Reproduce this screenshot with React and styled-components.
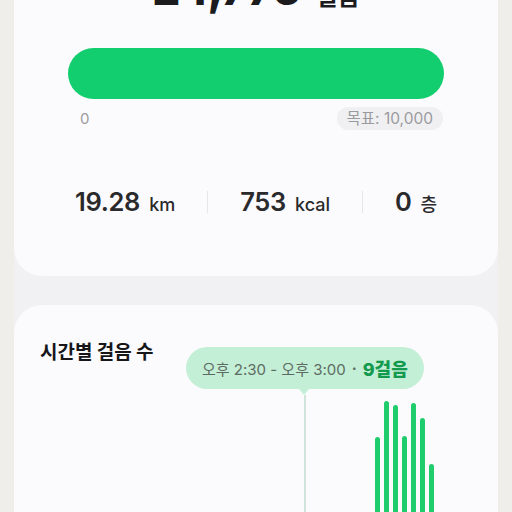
import React from "react";
import styled, { createGlobalStyle } from "styled-components";

const Global = createGlobalStyle`
  html, body { margin: 0; padding: 0; background: #efeeea; overflow: hidden; }
  body { font-family: Inter, "Noto Sans CJK KR", sans-serif; }
`;

const Column = styled.div`
  margin: -62px 14px 0;
  background: #f1f1f3;
  display: flex;
  flex-direction: column;
  gap: 29px;
  min-height: 600px;
`;

const Card = styled.section`
  background: #fbfbfd;
  border-radius: 28px;
  padding: ${(p) => p.$pad};
  display: flex;
  flex-direction: column;
`;

const FirstCard = styled(Card)`
  height: 338px;
  box-sizing: border-box;
`;

const Headline = styled.div`
  display: flex;
  justify-content: center;
  align-items: baseline;
  gap: 15px;
  height: 58px;
  color: #1c1c1e;
`;

const BigNum = styled.span`
  font-size: 44px;
  font-weight: 800;
  letter-spacing: -0.5px;
  line-height: 58px;
`;

const BigUnit = styled.span`
  font-family: "Noto Sans CJK KR", sans-serif;
  font-size: 24px;
  font-weight: 700;
`;

const Bar = styled.div`
  margin: 30px 54px 0;
  height: 51px;
  border-radius: 26px;
  background: #13ce6e;
`;

const Labels = styled.div`
  margin: 8px 55px 0 66px;
  display: flex;
  justify-content: space-between;
  align-items: center;
  color: #9b9b9f;
  font-size: 15px;
`;

const Pill = styled.span`
  background: #f0f0f2;
  border-radius: 12px;
  padding: 2px 10px;
  line-height: 19px;
  font-size: 15.5px;
  font-family: Inter, "Noto Sans CJK KR", sans-serif;
`;

const Stats = styled.div`
  margin-top: 56px;
  display: flex;
  justify-content: center;
  align-items: center;
  gap: 32px;
  color: #2a2a2c;
`;

const Stat = styled.div`
  display: flex;
  align-items: baseline;
  gap: 9px;
`;

const StatNum = styled.span`
  font-size: 25.5px;
  font-weight: 600;
  letter-spacing: -0.3px;
`;

const StatUnit = styled.span`
  font-family: Inter, "Noto Sans CJK KR", sans-serif;
  font-size: 18px;
  font-weight: 500;
`;

const Sep = styled.div`
  width: 1px;
  height: 22px;
  background: #e6e6e8;
`;

const ChartCard = styled(Card)`
  position: relative;
  height: 260px;
`;

const Title = styled.h2`
  margin: 0;
  font-family: "Noto Sans CJK KR", sans-serif;
  font-size: 19px;
  font-weight: 700;
  color: #161618;
  line-height: 26px;
`;

const Tooltip = styled.div`
  position: absolute;
  left: 172px;
  top: 42px;
  height: 42px;
  padding: 0 16px;
  border-radius: 21px;
  background: #c3efd6;
  display: flex;
  align-items: center;
  gap: 6px;
  color: #5e6b63;
  font-size: 15px;
  font-family: Inter, "Noto Sans CJK KR", sans-serif;
  &::after {
    content: "";
    position: absolute;
    left: 113px;
    bottom: -6px;
    border-left: 5px solid transparent;
    border-right: 5px solid transparent;
    border-top: 6px solid #c3efd6;
  }
`;

const Dot = styled.span`
  color: #5e6b63;
  font-weight: 700;
`;

const Steps = styled.span`
  color: #149a4e;
  font-weight: 800;
  font-size: 18px;
  font-family: Inter, "Noto Sans CJK KR", sans-serif;
`;

const Guide = styled.div`
  position: absolute;
  left: 290px;
  top: 90px;
  width: 1.5px;
  bottom: 0;
  background: #cfe4da;
`;

const Bars = styled.div`
  position: absolute;
  left: 360px;
  top: 0;
  bottom: 0;
  width: 80px;
`;

const BarStick = styled.div`
  position: absolute;
  width: 5px;
  bottom: 0;
  border-radius: 3px 3px 0 0;
  background: #1fcd6c;
`;

const sticks = [
  { x: 377, top: 437 },
  { x: 386, top: 401 },
  { x: 395, top: 405 },
  { x: 404, top: 436 },
  { x: 413, top: 403 },
  { x: 422, top: 418 },
  { x: 431, top: 464 },
];

export default function App() {
  return (
    <>
      <Global />
      <Column>
        <FirstCard $pad="22px 0 0 0">
          <Headline>
            <BigNum>24,776</BigNum>
            <BigUnit>걸음</BigUnit>
          </Headline>
          <Bar />
          <Labels>
            <span>0</span>
            <Pill>목표: 10,000</Pill>
          </Labels>
          <Stats>
            <Stat>
              <StatNum>19.28</StatNum>
              <StatUnit>km</StatUnit>
            </Stat>
            <Sep />
            <Stat>
              <StatNum>753</StatNum>
              <StatUnit>kcal</StatUnit>
            </Stat>
            <Sep />
            <Stat>
              <StatNum>0</StatNum>
              <StatUnit>층</StatUnit>
            </Stat>
          </Stats>
        </FirstCard>
        <ChartCard $pad="33px 26px 0">
          <Title>시간별 걸음 수</Title>
          <Tooltip>
            <span>오후 2:30 - 오후 3:00</span>
            <Dot>·</Dot>
            <Steps>9걸음</Steps>
          </Tooltip>
          <Guide />
          <Bars>
            {sticks.map((s, i) => (
              <BarStick
                key={i}
                style={{ left: s.x - 2.5 - 374, top: s.top - 305 }}
              />
            ))}
          </Bars>
        </ChartCard>
      </Column>
    </>
  );
}
